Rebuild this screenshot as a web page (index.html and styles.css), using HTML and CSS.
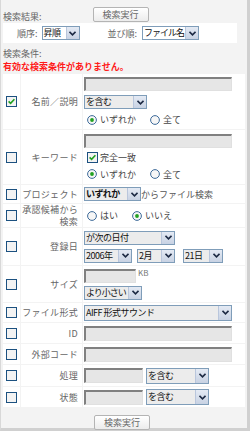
FILE: index.html
```html
<!DOCTYPE html>
<html lang="ja">
<head>
  <meta charset="UTF-8">
  <title>検索</title>
  <link rel="stylesheet" href="styles.css">
</head>
<body>
<div class="panel">

  <div class="head">
    <span class="cap">検索結果:</span>
    <button class="btn">検索実行</button>
  </div>

  <div class="sort">
    <span class="lbl">順序:</span>
    <span class="sel white" style="width:38px"><span class="val">昇順</span><span class="arr"><svg width="7" height="5" viewBox="0 0 7 5"><path d="M0.5 0.8 L3.5 3.8 L6.5 0.8" fill="none" stroke="#1d2a44" stroke-width="1.6"/></svg></span></span>
    <span class="lbl order">並び順:</span>
    <span class="sel white narrow" style="width:57px"><span class="val">ファイル名</span><span class="arr"><svg width="7" height="5" viewBox="0 0 7 5"><path d="M0.5 0.8 L3.5 3.8 L6.5 0.8" fill="none" stroke="#1d2a44" stroke-width="1.6"/></svg></span></span>
  </div>

  <div class="cap cond-cap">検索条件:</div>
  <div class="err">有効な検索条件がありません。</div>

  <table class="cond">
    <colgroup><col class="c-chk"><col class="c-lbl"><col class="c-ctl"></colgroup>

    <!-- 名前／説明 -->
    <tr class="r1">
      <td class="chk"><svg class="cb" width="11" height="11" viewBox="0 0 11 11"><rect x="0.5" y="0.5" width="10" height="10" fill="#f3f3f3" stroke="#1c5180"/><path d="M2.6 5.4 L4.6 7.4 L8.4 3.2" fill="none" stroke="#21a121" stroke-width="1.6"/></svg></td>
      <td class="lbl">名前／説明</td>
      <td class="ctl">
        <div class="stack">
          <span class="inp" style="width:148px"></span>
          <span class="sel" style="width:63px"><span class="val">を含む</span><span class="arr"><svg width="7" height="5" viewBox="0 0 7 5"><path d="M0.5 0.8 L3.5 3.8 L6.5 0.8" fill="none" stroke="#1d2a44" stroke-width="1.6"/></svg></span></span>
          <div class="radios">
            <span class="opt"><svg width="10" height="10" viewBox="0 0 10 10"><circle cx="5" cy="5" r="4.4" fill="#f6f6f6" stroke="#3d6a99"/><circle cx="5" cy="5" r="1.9" fill="#21a121"/></svg>いずれか</span>
            <span class="opt"><svg width="10" height="10" viewBox="0 0 10 10"><circle cx="5" cy="5" r="4.4" fill="#f6f6f6" stroke="#3d6a99"/></svg>全て</span>
          </div>
        </div>
      </td>
    </tr>

    <!-- キーワード -->
    <tr class="r2">
      <td class="chk"><svg class="cb" width="11" height="11" viewBox="0 0 11 11"><rect x="0.5" y="0.5" width="10" height="10" fill="#f3f3f3" stroke="#1c5180"/></svg></td>
      <td class="lbl">キーワード</td>
      <td class="ctl">
        <div class="stack">
          <span class="inp" style="width:148px"></span>
          <span class="opt exact"><svg width="11" height="11" viewBox="0 0 11 11"><rect x="0.5" y="0.5" width="10" height="10" fill="#f3f3f3" stroke="#1c5180"/><path d="M2.6 5.4 L4.6 7.4 L8.4 3.2" fill="none" stroke="#21a121" stroke-width="1.6"/></svg>完全一致</span>
          <div class="radios">
            <span class="opt"><svg width="10" height="10" viewBox="0 0 10 10"><circle cx="5" cy="5" r="4.4" fill="#f6f6f6" stroke="#3d6a99"/><circle cx="5" cy="5" r="1.9" fill="#21a121"/></svg>いずれか</span>
            <span class="opt"><svg width="10" height="10" viewBox="0 0 10 10"><circle cx="5" cy="5" r="4.4" fill="#f6f6f6" stroke="#3d6a99"/></svg>全て</span>
          </div>
        </div>
      </td>
    </tr>

    <!-- プロジェクト -->
    <tr class="r3">
      <td class="chk"><svg class="cb" width="11" height="11" viewBox="0 0 11 11"><rect x="0.5" y="0.5" width="10" height="10" fill="#f3f3f3" stroke="#1c5180"/></svg></td>
      <td class="lbl">プロジェクト</td>
      <td class="ctl">
        <div class="line">
          <span class="sel bold" style="width:57px"><span class="val">いずれか</span><span class="arr"><svg width="7" height="5" viewBox="0 0 7 5"><path d="M0.5 0.8 L3.5 3.8 L6.5 0.8" fill="none" stroke="#1d2a44" stroke-width="1.6"/></svg></span></span>
          <span class="txt">からファイル検索</span>
        </div>
      </td>
    </tr>

    <!-- 承認候補から検索 -->
    <tr class="r4">
      <td class="chk"><svg class="cb" width="11" height="11" viewBox="0 0 11 11"><rect x="0.5" y="0.5" width="10" height="10" fill="#f3f3f3" stroke="#1c5180"/></svg></td>
      <td class="lbl two">承認候補から<br>検索</td>
      <td class="ctl">
        <div class="radios">
          <span class="opt"><svg width="10" height="10" viewBox="0 0 10 10"><circle cx="5" cy="5" r="4.4" fill="#f6f6f6" stroke="#3d6a99"/></svg>はい</span>
          <span class="opt"><svg width="10" height="10" viewBox="0 0 10 10"><circle cx="5" cy="5" r="4.4" fill="#f6f6f6" stroke="#3d6a99"/><circle cx="5" cy="5" r="1.9" fill="#21a121"/></svg>いいえ</span>
        </div>
      </td>
    </tr>

    <!-- 登録日 -->
    <tr class="r5">
      <td class="chk"><svg class="cb" width="11" height="11" viewBox="0 0 11 11"><rect x="0.5" y="0.5" width="10" height="10" fill="#f3f3f3" stroke="#1c5180"/></svg></td>
      <td class="lbl">登録日</td>
      <td class="ctl">
        <div class="stack">
          <span class="sel" style="width:91px"><span class="val">が次の日付</span><span class="arr"><svg width="7" height="5" viewBox="0 0 7 5"><path d="M0.5 0.8 L3.5 3.8 L6.5 0.8" fill="none" stroke="#1d2a44" stroke-width="1.6"/></svg></span></span>
          <div class="line dates">
            <span class="sel" style="width:48px"><span class="val">2006年</span><span class="arr"><svg width="7" height="5" viewBox="0 0 7 5"><path d="M0.5 0.8 L3.5 3.8 L6.5 0.8" fill="none" stroke="#1d2a44" stroke-width="1.6"/></svg></span></span>
            <span class="sel" style="width:38px"><span class="val">2月</span><span class="arr"><svg width="7" height="5" viewBox="0 0 7 5"><path d="M0.5 0.8 L3.5 3.8 L6.5 0.8" fill="none" stroke="#1d2a44" stroke-width="1.6"/></svg></span></span>
            <span class="sel day" style="width:40px"><span class="val">21日</span><span class="arr"><svg width="7" height="5" viewBox="0 0 7 5"><path d="M0.5 0.8 L3.5 3.8 L6.5 0.8" fill="none" stroke="#1d2a44" stroke-width="1.6"/></svg></span></span>
          </div>
        </div>
      </td>
    </tr>

    <!-- サイズ -->
    <tr class="r6">
      <td class="chk"><svg class="cb" width="11" height="11" viewBox="0 0 11 11"><rect x="0.5" y="0.5" width="10" height="10" fill="#f3f3f3" stroke="#1c5180"/></svg></td>
      <td class="lbl">サイズ</td>
      <td class="ctl">
        <div class="stack tight">
          <div class="line size">
            <span class="inp" style="width:52px"></span>
            <span class="unit">KB</span>
          </div>
          <span class="sel narrow" style="width:58px"><span class="val">より小さい</span><span class="arr"><svg width="7" height="5" viewBox="0 0 7 5"><path d="M0.5 0.8 L3.5 3.8 L6.5 0.8" fill="none" stroke="#1d2a44" stroke-width="1.6"/></svg></span></span>
        </div>
      </td>
    </tr>

    <!-- ファイル形式 -->
    <tr class="r7">
      <td class="chk"><svg class="cb" width="11" height="11" viewBox="0 0 11 11"><rect x="0.5" y="0.5" width="10" height="10" fill="#f3f3f3" stroke="#1c5180"/></svg></td>
      <td class="lbl">ファイル形式</td>
      <td class="ctl">
        <span class="sel tall" style="width:148px"><span class="val">AIFF 形式サウンド</span><span class="arr"><svg width="7" height="5" viewBox="0 0 7 5"><path d="M0.5 0.8 L3.5 3.8 L6.5 0.8" fill="none" stroke="#1d2a44" stroke-width="1.6"/></svg></span></span>
      </td>
    </tr>

    <!-- ID -->
    <tr class="r8">
      <td class="chk"><svg class="cb" width="11" height="11" viewBox="0 0 11 11"><rect x="0.5" y="0.5" width="10" height="10" fill="#f3f3f3" stroke="#1c5180"/></svg></td>
      <td class="lbl">ID</td>
      <td class="ctl"><span class="inp big" style="width:148px"></span></td>
    </tr>

    <!-- 外部コード -->
    <tr class="r8">
      <td class="chk"><svg class="cb" width="11" height="11" viewBox="0 0 11 11"><rect x="0.5" y="0.5" width="10" height="10" fill="#f3f3f3" stroke="#1c5180"/></svg></td>
      <td class="lbl">外部コード</td>
      <td class="ctl"><span class="inp big" style="width:148px"></span></td>
    </tr>

    <!-- 処理 -->
    <tr class="r10">
      <td class="chk"><svg class="cb" width="11" height="11" viewBox="0 0 11 11"><rect x="0.5" y="0.5" width="10" height="10" fill="#f3f3f3" stroke="#1c5180"/></svg></td>
      <td class="lbl">処理</td>
      <td class="ctl">
        <div class="line pair">
          <span class="inp big" style="width:59px"></span>
          <span class="sel tall" style="width:63px"><span class="val">を含む</span><span class="arr"><svg width="7" height="5" viewBox="0 0 7 5"><path d="M0.5 0.8 L3.5 3.8 L6.5 0.8" fill="none" stroke="#1d2a44" stroke-width="1.6"/></svg></span></span>
        </div>
      </td>
    </tr>

    <!-- 状態 -->
    <tr class="r8">
      <td class="chk"><svg class="cb" width="11" height="11" viewBox="0 0 11 11"><rect x="0.5" y="0.5" width="10" height="10" fill="#f3f3f3" stroke="#1c5180"/></svg></td>
      <td class="lbl">状態</td>
      <td class="ctl">
        <div class="line pair">
          <span class="inp big" style="width:59px"></span>
          <span class="sel tall" style="width:63px"><span class="val">を含む</span><span class="arr"><svg width="7" height="5" viewBox="0 0 7 5"><path d="M0.5 0.8 L3.5 3.8 L6.5 0.8" fill="none" stroke="#1d2a44" stroke-width="1.6"/></svg></span></span>
        </div>
      </td>
    </tr>
  </table>

  <div class="foot">
    <button class="btn">検索実行</button>
  </div>

</div>
</body>
</html>
```

FILE: styles.css
```css
:root {
  --bg: #f3f3f3;
  --label: #666;
  --font: "Noto Sans CJK JP", "Noto Sans", sans-serif;
}

body {
  margin: 0;
  font-family: var(--font);
  font-size: 9px;
  color: var(--label);
}

.panel {
  width: 250px;
  height: 431px;
  box-sizing: border-box;
  background: var(--bg);
  border-left: 1px solid #d8d8d8;
  border-right: 3px solid #d0d0d0;
  border-bottom: 3px solid #d0d0d0;
  padding: 7px 2px 0 2px;
}

/* ボタン */
.btn {
  width: 56px;
  height: 15px;
  padding: 0;
  font-family: var(--font);
  font-size: 9px;
  line-height: 13px;
  color: #666;
  background: linear-gradient(#ffffff, #ececec);
  border: 1px solid #b4b4b4;
  border-radius: 2px;
}

.head {
  display: flex;
  align-items: flex-end;
  height: 15px;
}

.head .btn { margin-left: 51px; }

.cap {
  line-height: 11px;
  color: var(--label);
}

.sort {
  display: flex;
  align-items: center;
  width: 234px;
  height: 20px;
  margin-top: 1px;
  background: #fff;
}

.sort .lbl { margin: 0 4px 0 14px; line-height: 11px; }
.sort .order { margin-left: 28px; margin-right: 5px; }

.cond-cap { margin-top: 5px; }

.err {
  margin-top: 2px;
  line-height: 11px;
  color: #ff1a1a;
  font-weight: bold;
}

/* 条件テーブル */
.cond {
  table-layout: fixed;
  width: 244px;
  margin-left: -1px;
  margin-top: 1px;
  border-collapse: separate;
  border-spacing: 1px;
}

.c-chk { width: 17px; }
.c-lbl { width: 61px; }

.cond td {
  background: #fff;
  padding: 0;
  vertical-align: middle;
}

.r1 td { height: 55px; }
.r2 td { height: 54px; }
.r3 td { height: 18px; }
.r4 td { height: 23px; }
.r5 td { height: 37px; }
.r6 td { height: 36px; }
.r7 td { height: 19px; }
.r8 td { height: 20px; }
.r10 td { height: 21px; }

td.chk { text-align: center; }
.cb { display: block; margin: 0 auto; }

td.lbl {
  text-align: right;
  padding-right: 4px;
  line-height: 11px;
  letter-spacing: 0.3px;
  white-space: nowrap;
}

td.lbl.two { line-height: 11.5px; }

td.ctl { padding-left: 1px; }

.stack {
  display: flex;
  flex-direction: column;
  align-items: flex-start;
  gap: 4px;
}

.stack.tight { gap: 3px; }

.line {
  display: flex;
  align-items: center;
}

.dates { gap: 5px; }
.dates .day { margin-left: 3px; }
.pair { gap: 3px; }
.size { align-items: flex-start; }

.unit {
  margin-left: 2px;
  font-size: 8px;
  line-height: 8px;
  color: #777;
}

.txt {
  color: #555;
  line-height: 11px;
}

/* テキスト入力 */
.inp {
  display: block;
  height: 14px;
  box-sizing: border-box;
  background: #e6e6e6;
  border-top: 2px solid #808080;
  border-left: 2px solid #808080;
  border-right: 1px solid #e0e0e0;
  border-bottom: 1px solid #e0e0e0;
}

.inp.big { height: 15px; }

/* セレクト */
.sel {
  display: flex;
  align-items: stretch;
  height: 14px;
  box-sizing: border-box;
  border: 1px solid #7f9db9;
  background: #ececec;
  color: #111;
  font-size: 9px;
  line-height: 12px;
}

.sel.white { background: #fff; }
.sel.tall { height: 16px; }
.sel.tall .val { line-height: 14px; }
.sel.bold .val { font-weight: bold; letter-spacing: -0.6px; }
.sel.narrow .val { letter-spacing: -1px; }

.sel .val {
  flex: 1;
  min-width: 0;
  padding-left: 1px;
  letter-spacing: -0.5px;
  white-space: nowrap;
  overflow: hidden;
}

.sel .arr {
  flex: none;
  width: 12px;
  display: flex;
  align-items: center;
  justify-content: center;
  background: linear-gradient(#e4eaf4, #c8d2e3);
  border-left: 1px solid #b9c6dc;
}

/* ラジオ・チェック */
.radios {
  display: flex;
  align-items: center;
  height: 13px;
  padding-left: 3px;
}

.opt {
  display: flex;
  align-items: center;
  gap: 3px;
  line-height: 11px;
  color: #444;
  margin-right: 14px;
}

.opt.exact {
  margin-left: 3px;
  gap: 2px;
  height: 12px;
}

.foot {
  text-align: center;
  padding-top: 7px;
  padding-right: 4px;
}
```
